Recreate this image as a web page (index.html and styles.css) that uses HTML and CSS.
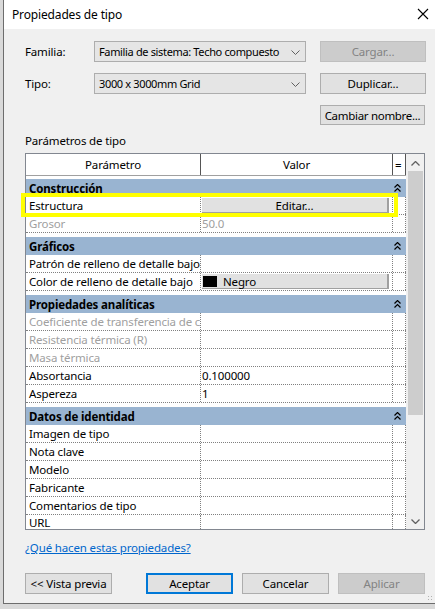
FILE: index.html
```html
<!DOCTYPE html>
<html lang="es">
<head>
    <meta charset="UTF-8">
    <meta name="viewport" content="width=device-width, initial-scale=1.0">
    <title>Propiedades de tipo</title>
    <link rel="stylesheet" href="styles.css">
</head>
<body>
    <div class="dialog">
        <div class="titlebar">
            <span>Propiedades de tipo</span>
            <svg class="close" width="12" height="12" viewBox="0 0 12 12"><path d="M1 1L11 11M11 1L1 11" stroke="#000" stroke-width="1.1" fill="none"/></svg>
        </div>
        <div class="content">
            <div class="form-row">
                <label>Familia:</label>
                <div class="combo">Familia de sistema: Techo compuesto
                    <svg class="caret" width="9" height="5" viewBox="0 0 9 5"><path d="M0.5 0.5L4.5 4.5L8.5 0.5" stroke="#606060" fill="none"/></svg>
                </div>
                <button class="btn disabled">Cargar...</button>
            </div>
            <div class="form-row">
                <label>Tipo:</label>
                <div class="combo">3000 x 3000mm Grid
                    <svg class="caret" width="9" height="5" viewBox="0 0 9 5"><path d="M0.5 0.5L4.5 4.5L8.5 0.5" stroke="#606060" fill="none"/></svg>
                </div>
                <button class="btn">Duplicar...</button>
            </div>
            <div class="form-row end">
                <button class="btn rename">Cambiar nombre...</button>
            </div>

            <div class="section-label">Parámetros de tipo</div>
            <div class="props">
                <div class="props-main">
                    <div class="props-head">
                        <div>Parámetro</div>
                        <div>Valor</div>
                        <div>=</div>
                    </div>
                    <div class="props-body">
                        <div class="group first"><span>Construcción</span><svg class="fold" width="7" height="8" viewBox="0 0 7 8"><path d="M0.5 3.5L3.5 0.5L6.5 3.5M0.5 7.5L3.5 4.5L6.5 7.5" stroke="#000" stroke-width="1.2" fill="none"/></svg></div>
                        <div class="row"><div class="cell">Estructura</div><div class="cell"><span class="cell-btn center">Editar...</span></div><div class="cell"></div></div>
                        <div class="row muted"><div class="cell">Grosor</div><div class="cell">50.0</div><div class="cell"></div></div>

                        <div class="group"><span>Gráficos</span><svg class="fold" width="7" height="8" viewBox="0 0 7 8"><path d="M0.5 3.5L3.5 0.5L6.5 3.5M0.5 7.5L3.5 4.5L6.5 7.5" stroke="#000" stroke-width="1.2" fill="none"/></svg></div>
                        <div class="row"><div class="cell">Patrón de relleno de detalle bajo</div><div class="cell"></div><div class="cell"></div></div>
                        <div class="row"><div class="cell">Color de relleno de detalle bajo</div><div class="cell"><span class="cell-btn"><i class="swatch"></i>Negro</span></div><div class="cell"></div></div>

                        <div class="group"><span>Propiedades analíticas</span><svg class="fold" width="7" height="8" viewBox="0 0 7 8"><path d="M0.5 3.5L3.5 0.5L6.5 3.5M0.5 7.5L3.5 4.5L6.5 7.5" stroke="#000" stroke-width="1.2" fill="none"/></svg></div>
                        <div class="row muted"><div class="cell">Coeficiente de transferencia de calor (U)</div><div class="cell"></div><div class="cell"></div></div>
                        <div class="row muted"><div class="cell">Resistencia térmica (R)</div><div class="cell"></div><div class="cell"></div></div>
                        <div class="row muted"><div class="cell">Masa térmica</div><div class="cell"></div><div class="cell"></div></div>
                        <div class="row"><div class="cell">Absortancia</div><div class="cell">0.100000</div><div class="cell"></div></div>
                        <div class="row"><div class="cell">Aspereza</div><div class="cell">1</div><div class="cell"></div></div>

                        <div class="group"><span>Datos de identidad</span><svg class="fold" width="7" height="8" viewBox="0 0 7 8"><path d="M0.5 3.5L3.5 0.5L6.5 3.5M0.5 7.5L3.5 4.5L6.5 7.5" stroke="#000" stroke-width="1.2" fill="none"/></svg></div>
                        <div class="row"><div class="cell">Imagen de tipo</div><div class="cell"></div><div class="cell"></div></div>
                        <div class="row"><div class="cell">Nota clave</div><div class="cell"></div><div class="cell"></div></div>
                        <div class="row"><div class="cell">Modelo</div><div class="cell"></div><div class="cell"></div></div>
                        <div class="row"><div class="cell">Fabricante</div><div class="cell"></div><div class="cell"></div></div>
                        <div class="row"><div class="cell">Comentarios de tipo</div><div class="cell"></div><div class="cell"></div></div>
                        <div class="row last"><div class="cell">URL</div><div class="cell"></div><div class="cell"></div></div>
                    </div>
                </div>
                <div class="scrollbar">
                    <svg class="arrow" width="9" height="5" viewBox="0 0 9 5"><path d="M0.5 4.5L4.5 0.5L8.5 4.5" stroke="#606060" stroke-width="1.3" fill="none"/></svg>
                    <div class="thumb"></div>
                    <div class="track"></div>
                    <svg class="arrow" width="9" height="5" viewBox="0 0 9 5"><path d="M0.5 0.5L4.5 4.5L8.5 0.5" stroke="#606060" stroke-width="1.3" fill="none"/></svg>
                </div>
                <div class="highlight"></div>
            </div>

            <a class="help" href="#">¿Qué hacen estas propiedades?</a>

            <div class="actions">
                <button class="btn">&lt;&lt; Vista previa</button>
                <button class="btn primary">Aceptar</button>
                <button class="btn">Cancelar</button>
                <button class="btn disabled">Aplicar</button>
            </div>
        </div>
        <div class="grip"></div>
    </div>
</body>
</html>
```

FILE: styles.css
```css
body { margin: 0; background: #d9d9d9; font-family: "Noto Sans", "Segoe UI", sans-serif; font-size: 11.5px; letter-spacing: -0.15px; color: #000; height: 609px; overflow: hidden; }
.dialog { position: relative; margin-left: 3px; width: 431px; height: 603px; background: #f0f0f0; border-left: 1px solid #6d6d6d; border-bottom: 1px solid #6d6d6d; }
.titlebar { height: 29px; background: #fff; display: flex; align-items: center; justify-content: space-between; padding: 0 6px 0 8px; font-size: 12px; }
.close { margin-top: -1px; }
.content { padding: 12px 0 0 21px; }
.form-row { display: flex; align-items: center; height: 21px; margin-bottom: 11px; }
.form-row.end { justify-content: flex-end; height: 20px; margin-bottom: 0; padding-right: 10px; }
.form-row label { width: 69px; }
.combo { position: relative; width: 212px; height: 21px; box-sizing: border-box; border: 1px solid #adadad; background: #e5e5e5; padding-left: 4px; line-height: 19px; margin-right: 14px; white-space: nowrap; font-size: 11px; letter-spacing: -0.35px; }
.caret { position: absolute; right: 5px; top: 8px; }
.btn { font-family: inherit; font-size: 11.5px; letter-spacing: -0.15px; height: 21px; width: 106px; box-sizing: border-box; border: 1px solid #adadad; background: #e1e1e1; color: #000; padding: 0; white-space: nowrap; }
.btn.disabled { background: #cccccc; border-color: #bfbfbf; color: #838383; }
.btn.rename { width: 105px; height: 20px; letter-spacing: -0.3px; }
.btn.primary { border: 2px solid #0078d7; }
.section-label { margin-top: 8px; height: 16px; line-height: 16px; }
.props { position: relative; margin: 4px 0 0 0; width: 400px; height: 377px; box-sizing: border-box; border: 1px solid #828790; background: #fff; display: flex; }
.props-main { width: 380px; }
.props-head { display: grid; grid-template-columns: 175px 192px 13px; height: 22px; box-sizing: border-box; border-bottom: 1px solid #a0a0a0; }
.props-head div { text-align: center; line-height: 21px; border-right: 1px solid #555; }
.props-head div:last-child { text-align: left; padding-left: 2px; }
.props-body { height: 353px; overflow: hidden; }
.group { height: 18px; margin-top: 4px; background: #99b4d1; display: flex; align-items: center; justify-content: space-between; padding: 0 5px 0 3px; font-weight: bold; }
.group.first { margin-top: 3px; }
.row { display: grid; grid-template-columns: 175px 192px 13px; height: 18px; box-sizing: border-box; border-bottom: 1px dotted #808080; }
.row.last { height: 14px; border-bottom: none; }
.cell { border-right: 1px dotted #808080; padding-left: 3px; line-height: 17px; white-space: nowrap; overflow: hidden; }
.row.last .cell { line-height: 15px; }
.row .cell:nth-child(2) { padding-left: 1px; }
.row.muted { color: #a0a0a0; }
.cell-btn { display: flex; align-items: center; height: 15px; margin-top: 1px; width: 187px; box-sizing: border-box; background: #e1e1e1; border-right: 2px solid #a0a0a0; border-bottom: 1px solid #a0a0a0; line-height: 15px; }
.cell-btn.center { justify-content: center; }
.swatch { width: 14px; height: 11px; background: #000; margin: 0 6px 0 1px; }
.scrollbar { width: 18px; background: #f0f0f0; display: flex; flex-direction: column; align-items: center; }
.arrow { margin: 7px 0 5px; }
.thumb { width: 15px; height: 244px; background: #cdcdcd; }
.track { flex: 1; }
.highlight { position: absolute; left: -5px; top: 39px; width: 377px; height: 24px; box-sizing: border-box; border: 4px solid #ffff00; }
.help { display: block; margin-top: 10px; height: 16px; line-height: 16px; color: #0066cc; width: max-content; }
.actions { display: flex; margin-top: 17px; }
.actions .btn { width: 87px; margin-right: 9px; }
.actions .btn:first-child { margin-right: 34px; }
.grip { position: absolute; right: 2px; bottom: 2px; width: 6px; height: 6px; background: radial-gradient(circle, #b0b0b0 0.7px, transparent 1px) 0 0 / 3px 3px; }
```
